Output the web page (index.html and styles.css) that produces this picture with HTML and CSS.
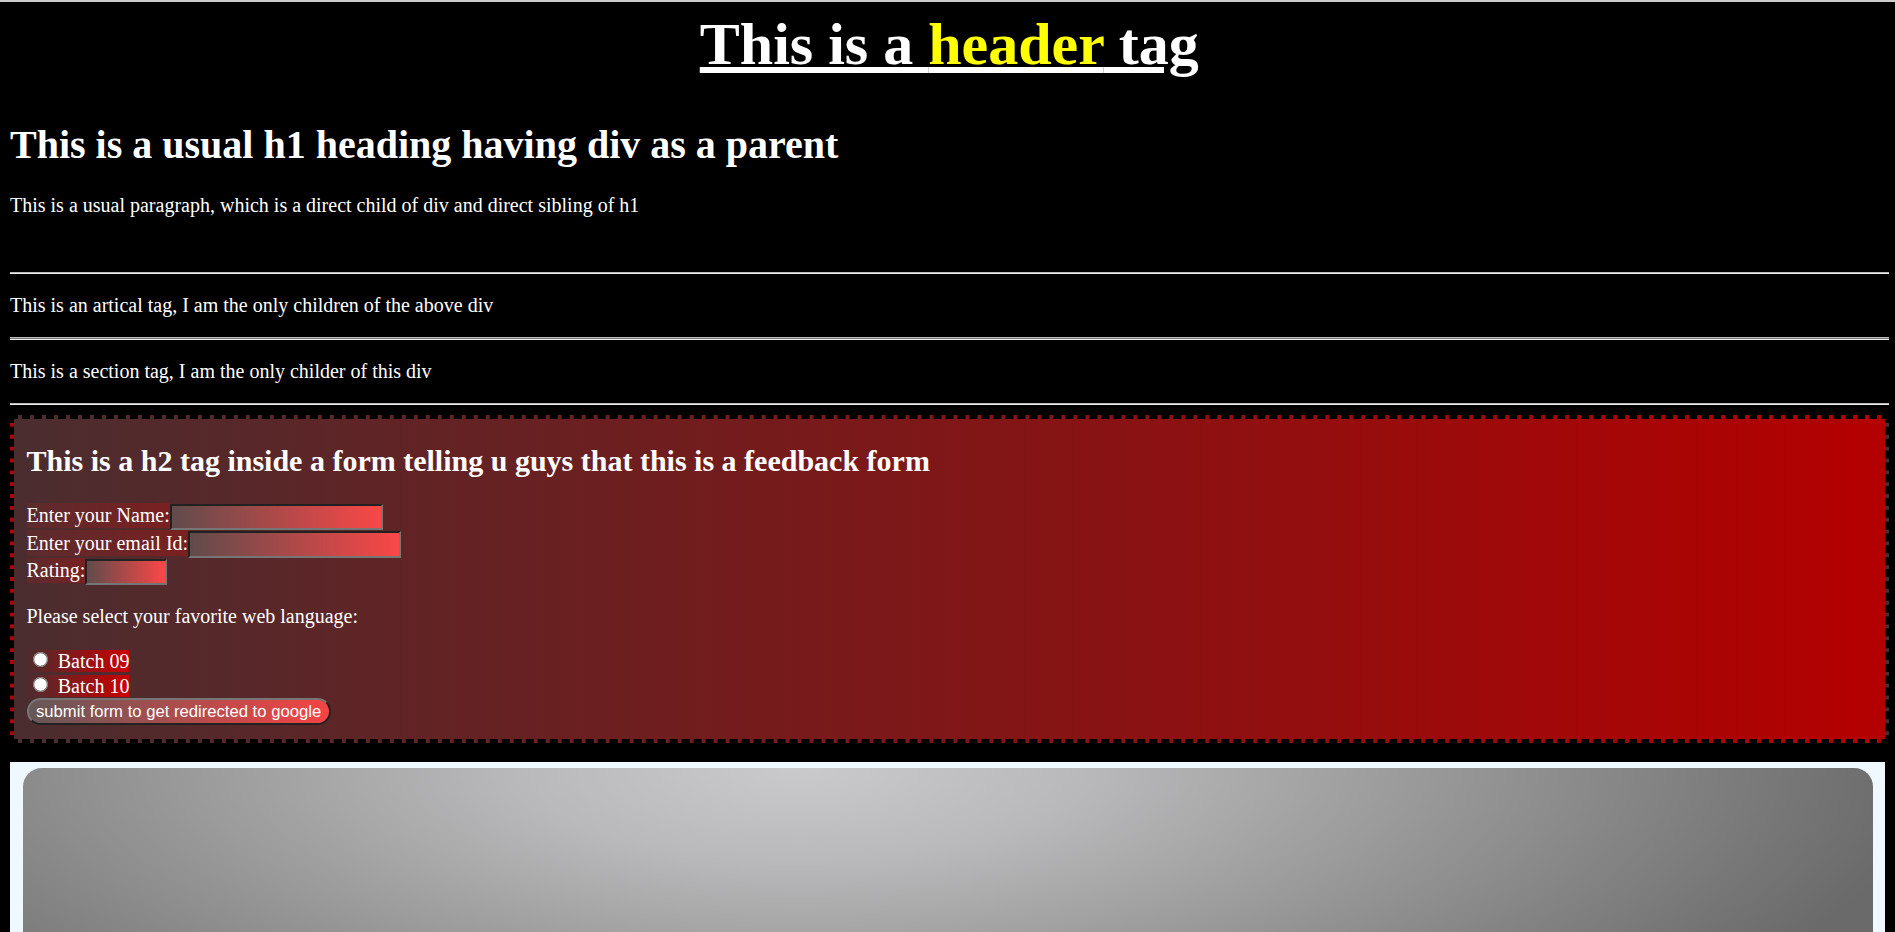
FILE: index.html
```html
<!DOCTYPE html>
<html lang="en">
<head>
<meta charset="utf-8">
<title>HTML tags demo</title>
<link rel="stylesheet" href="styles.css">
</head>
<body>
<header class="page-header">This is a <span class="hl">header</span> tag</header>
<div class="intro">
  <h1>This is a usual h1 heading having div as a parent</h1>
  <p>This is a usual paragraph, which is a direct child of div and direct sibling of h1</p>
</div>
<hr class="rule">
<article><p>This is an artical tag, I am the only children of the above div</p></article>
<hr class="rule rule-double">
<div><section><p>This is a section tag, I am the only childer of this div</p></section></div>
<hr class="rule">
<form class="feedback" action="https://www.google.com" method="get">
  <h2>This is a h2 tag inside a form telling u guys that this is a feedback form</h2>
  <label class="field-label" for="name">Enter your Name:</label><input class="field" id="name" type="text"><br>
  <label class="field-label" for="email">Enter your email Id:</label><input class="field" id="email" type="text"><br>
  <label class="field-label" for="rating">Rating:</label><input class="field field-short" id="rating" type="text"><br>
  <p>Please select your favorite web language:</p>
  <label class="choice"><input class="radio" type="radio" name="batch" value="09"> Batch 09</label><br>
  <label class="choice"><input class="radio" type="radio" name="batch" value="10"> Batch 10</label><br>
  <button class="submit" type="submit">submit form to get redirected to google</button>
</form>
<div class="panel"><div class="panel-box"></div></div>
</body>
</html>
```

FILE: styles.css
```css
html {
  zoom: 1.25;
  background: #000;
  border-top: 1.6px solid #cdcdcd;
}

body {
  margin: 6.4px 5.2px 8px 8px;
  background: #000;
  color: #fff;
  font-family: "Liberation Serif", "Times New Roman", serif;
}

.page-header {
  font-size: 48px;
  font-weight: bold;
  text-align: center;
  text-decoration: underline;
  margin-bottom: 33.2px;
}

.hl {
  color: #ff0;
}

.intro {
  margin-bottom: 43.8px;
}

.rule {
  height: 0;
  margin: 8px 0;
  border: 0;
  border-top: 1px solid #bcbcbc;
  border-bottom: 1px solid #ededed;
}

.rule-double {
  height: 0.8px;
  background: #7a7a7a;
}

.feedback {
  border: 3.2px dashed #000;
  padding: 0 10px 11.5px;
  background: linear-gradient(to right, #4b2d2f, #b40000);
}

.field-label {
  display: inline-block;
  padding: 1px 0;
  background: linear-gradient(to right, #5c2b2d, #7a2021);
}

.field {
  width: 170.4px;
  box-sizing: border-box;
  margin: 0;
  padding: 1px 2px;
  border: 2px inset #767676;
  background: linear-gradient(to right, #614b4b, #fb4747);
  color: #fff;
  font: 13.33px "Liberation Sans", Arial, sans-serif;
}

.field-short {
  width: 65.6px;
}

.choice {
  background: linear-gradient(to right, #4d2c2e, #cc0000);
}

.radio {
  margin: 3px 3px 0 5px;
}

.submit {
  margin: 0;
  padding: 1px 6px;
  border: 2px outset #767676;
  border-radius: 12px;
  background: linear-gradient(to right, #665757, #f54343);
  color: #fff;
  font: 13.33px "Liberation Sans", Arial, sans-serif;
}

.panel {
  margin: 15px 2.8px 0 0;
  padding: 5px 10px;
  background: #f0f8ff;
}

.panel-box {
  height: 320px;
  border-radius: 15px;
  background: radial-gradient(ellipse 900px 300px at 42% 0, #cacacc 0%, #b9b9bb 25%, #8f8f8f 65%, #6a6a6a 100%);
}
```
